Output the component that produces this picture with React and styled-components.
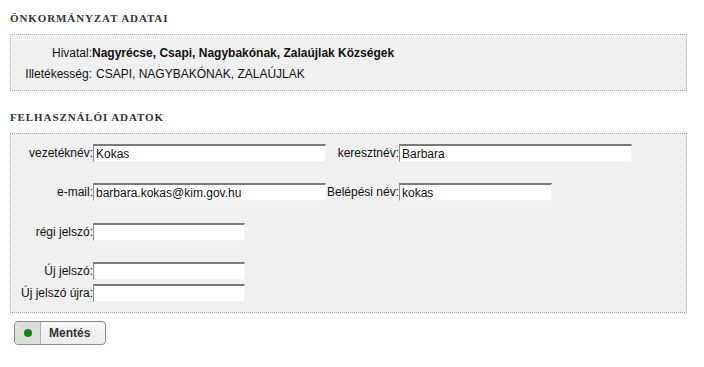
import styled, { createGlobalStyle } from 'styled-components';

const GlobalStyle = createGlobalStyle`
  body {
    margin: 0;
    background: #fff;
    font-family: "Liberation Sans", Arial, sans-serif;
    font-size: 12px;
    color: #111;
  }
`;

const Page = styled.div`
  padding: 12px 17px 20px 10px;
`;

const SectionTitle = styled.h2`
  margin: 0 0 9px;
  font-family: "Liberation Serif", "DejaVu Serif", serif;
  font-size: 11px;
  font-weight: bold;
  letter-spacing: 0.9px;
  color: #333;
  line-height: 13px;
`;

const Panel = styled.div`
  background: #f0f0f0;
  border: 1px dotted #a8a8a8;
  padding: ${(p) => p.$pad};
  margin-bottom: ${(p) => p.$mb || '0'};
`;

const InfoRow = styled.div`
  display: flex;
  align-items: center;
  height: 21px;
`;

const InfoLabel = styled.span`
  width: 81px;
  text-align: right;
  flex: none;
`;

const InfoValue = styled.span`
  font-weight: ${(p) => (p.$bold ? 'bold' : 'normal')};
  padding-left: ${(p) => (p.$gap ? '4px' : '0')};
  white-space: nowrap;
`;

const FormRow = styled.div`
  display: flex;
  align-items: center;
  height: 22px;
  margin-top: ${(p) => p.$mt || '0'};
`;

const Label = styled.label`
  width: ${(p) => p.$w};
  flex: none;
  text-align: right;
  white-space: nowrap;
`;

const Input = styled.input`
  box-sizing: border-box;
  width: ${(p) => p.$w};
  height: 18px;
  margin: 0;
  padding: 0 2px;
  border: none;
  border-top: 2px solid #7a7a7a;
  border-left: 1px solid #8c8c8c;
  border-right: 1px solid #f4f4f4;
  border-bottom: 1px solid #f4f4f4;
  background: #fff;
  font-family: "Liberation Sans", Arial, sans-serif;
  font-size: 12px;
  color: #111;
  outline: none;
`;

const Button = styled.button`
  display: flex;
  align-items: stretch;
  margin-left: 4px;
  padding: 0;
  width: 92px;
  height: 24px;
  border: 1px solid #8a8a8a;
  border-radius: 4px;
  background: linear-gradient(#f8f8f8, #ececec);
  font-family: "Liberation Sans", Arial, sans-serif;
  font-size: 12px;
  font-weight: bold;
  color: #333;
  overflow: hidden;
  cursor: pointer;
`;

const ButtonIcon = styled.span`
  width: 25px;
  display: flex;
  align-items: center;
  justify-content: center;
  background: #dcdcdc;
  border-right: 1px solid #b0b0b0;
`;

const Dot = styled.span`
  width: 8px;
  height: 8px;
  border-radius: 50%;
  background: #0f8a0f;
`;

const ButtonText = styled.span`
  display: flex;
  align-items: center;
  padding-left: 8px;
`;

export default function App() {
  return (
    <Page>
      <GlobalStyle />
      <SectionTitle>ÖNKORMÁNYZAT ADATAI</SectionTitle>
      <Panel $pad="7px 0 6px" $mb="20px">
        <InfoRow>
          <InfoLabel>Hivatal:</InfoLabel>
          <InfoValue $bold>Nagyrécse, Csapi, Nagybakónak, Zalaújlak Községek</InfoValue>
        </InfoRow>
        <InfoRow>
          <InfoLabel>Illetékesség:</InfoLabel>
          <InfoValue $gap>CSAPI, NAGYBAKÓNAK, ZALAÚJLAK</InfoValue>
        </InfoRow>
      </Panel>

      <SectionTitle>FELHASZNÁLÓI ADATOK</SectionTitle>
      <Panel $pad="8px 0 8px" $mb="8px">
        <FormRow>
          <Label $w="82px">vezetéknév:</Label>
          <Input $w="233px" defaultValue="Kokas" />
          <Label $w="73px">keresztnév:</Label>
          <Input $w="233px" defaultValue="Barbara" />
        </FormRow>
        <FormRow $mt="17px">
          <Label $w="82px">e-mail:</Label>
          <Input $w="233px" defaultValue="barbara.kokas@kim.gov.hu" />
          <Label $w="73px">Belépési név:</Label>
          <Input $w="153px" defaultValue="kokas" />
        </FormRow>
        <FormRow $mt="18px">
          <Label $w="82px">régi jelszó:</Label>
          <Input $w="152px" type="password" />
        </FormRow>
        <FormRow $mt="17px">
          <Label $w="82px">Új jelszó:</Label>
          <Input $w="152px" type="password" />
        </FormRow>
        <FormRow>
          <Label $w="82px">Új jelszó újra:</Label>
          <Input $w="152px" type="password" />
        </FormRow>
      </Panel>

      <Button type="button">
        <ButtonIcon>
          <Dot />
        </ButtonIcon>
        <ButtonText>Mentés</ButtonText>
      </Button>
    </Page>
  );
}
